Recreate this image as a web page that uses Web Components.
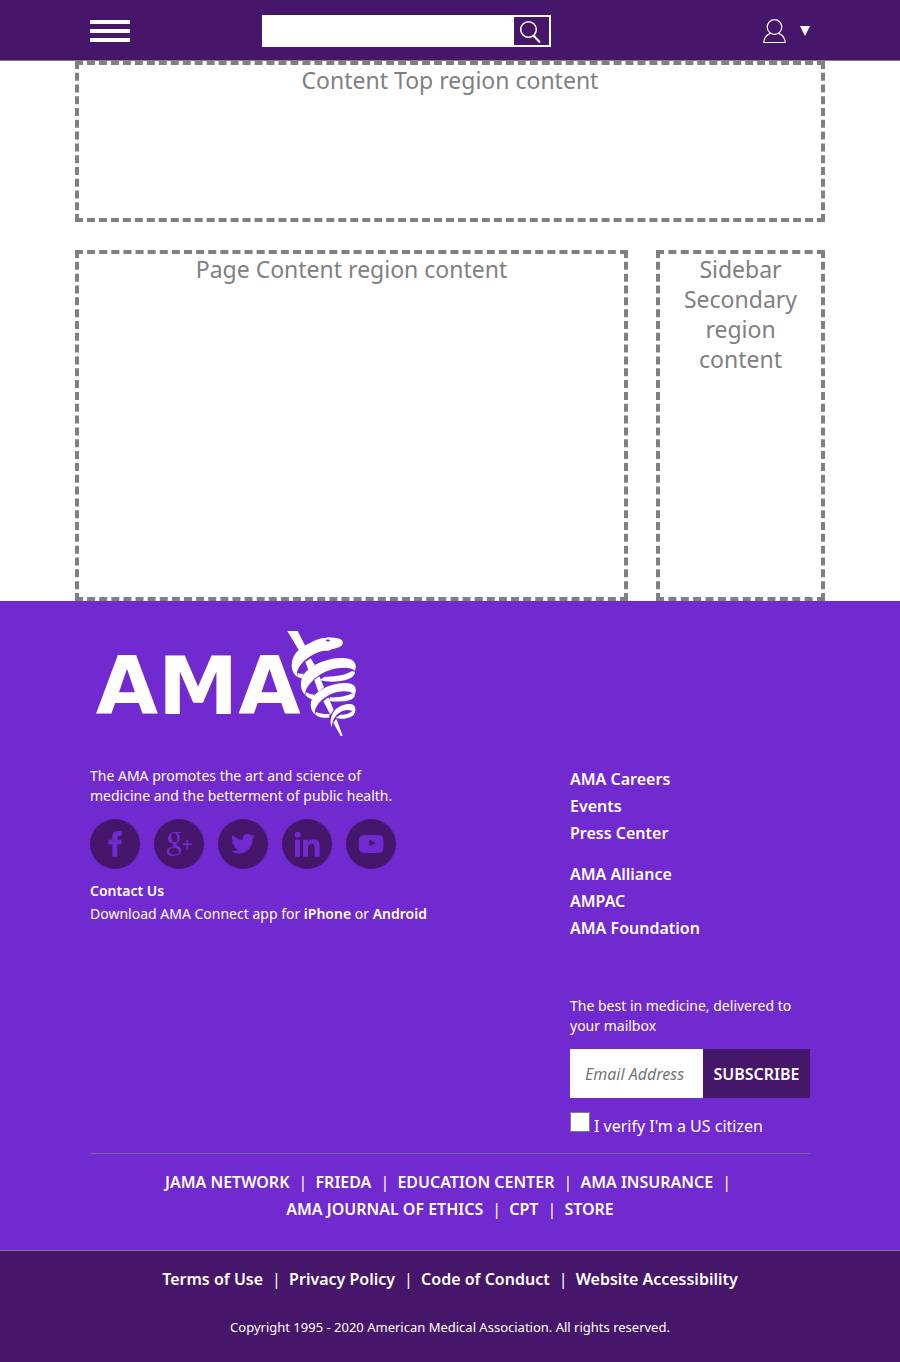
<!DOCTYPE html>
<html lang="en">
<head>
<meta charset="utf-8">
<meta name="viewport" content="width=device-width, initial-scale=1">
<title>American Medical Association</title>
<style>
  :root {
    --purple: #7129d0;
    --dark: #46166b;
    --gray: #808080;
  }
  body {
    margin: 0;
    background: #fff;
    font-family: "Noto Sans", "Open Sans", sans-serif;
    color: #fff;
  }
</style>
</head>
<body>
<ama-page>
  <ama-header slot="header"></ama-header>
  <ama-region slot="top">Content Top region content</ama-region>
  <ama-region slot="content" class="tall">Page Content region content</ama-region>
  <ama-region slot="sidebar" class="tall">Sidebar Secondary region content</ama-region>
  <ama-footer slot="footer"></ama-footer>
</ama-page>

<script>
function define(name, html, setup) {
  const template = document.createElement('template');
  template.innerHTML = html;
  customElements.define(name, class extends HTMLElement {
    constructor() {
      super();
      this.attachShadow({ mode: 'open' }).append(template.content.cloneNode(true));
    }
    connectedCallback() {
      if (setup) setup(this, this.shadowRoot);
    }
  });
}

define('ama-page', `
  <style>
    :host { display: block; }
    main {
      display: grid;
      grid-template-columns: 553fr 169fr;
      gap: 28px;
      max-width: 750px;
      margin: 0 auto;
    }
    .top { grid-column: 1 / -1; }
  </style>
  <slot name="header"></slot>
  <main>
    <div class="top"><slot name="top"></slot></div>
    <slot name="content"></slot>
    <slot name="sidebar"></slot>
  </main>
  <slot name="footer"></slot>
`);

define('ama-region', `
  <style>
    :host {
      display: block;
      box-sizing: border-box;
      min-height: 161px;
      padding: 0 15px;
      border: 4px dashed var(--gray);
      color: var(--gray);
      font-size: 23px;
      line-height: 30px;
      text-align: center;
    }
    :host(.tall) { min-height: 351px; }
  </style>
  <slot></slot>
`);

define('ama-header', `
  <style>
    :host {
      display: block;
      background: var(--dark);
      border-bottom: 1px solid var(--gray);
    }
    header {
      display: grid;
      grid-template-columns: 172px 289px 1fr;
      align-items: center;
      box-sizing: border-box;
      max-width: 750px;
      min-height: 60px;
      margin: 0 auto;
      padding: 0 15px;
    }
    button {
      margin: 0;
      padding: 0;
      border: 0;
      background: none;
      color: #fff;
      cursor: pointer;
    }
    svg { display: block; }
    .menu {
      display: grid;
      gap: 5px;
      width: 40px;
      margin-top: 2px;
    }
    .menu span { height: 4px; background: #fff; }
    form {
      display: flex;
      box-sizing: border-box;
      height: 32px;
      margin-top: 2px;
      border: 2px solid #fff;
      background: #fff;
    }
    input {
      flex: 1;
      min-width: 0;
      padding: 0 8px;
      border: 0;
      outline: 0;
      font: 16px "Noto Sans", sans-serif;
    }
    .search {
      display: grid;
      place-items: center;
      width: 35px;
      background: var(--dark);
    }
    .user {
      display: flex;
      align-items: center;
      gap: 14px;
      justify-self: end;
      margin-top: 2px;
    }
  </style>
  <header>
    <button class="menu" type="button" aria-label="Menu"><span></span><span></span><span></span></button>
    <form role="search">
      <input type="search" aria-label="Search">
      <button class="search" type="button" aria-label="Submit search">
        <svg width="24" height="24" viewBox="0 0 24 24" fill="none" stroke="#fff">
          <circle cx="8.500" cy="10.500" r="7.800" stroke-width="1.500"/>
          <path d="M13.500 16.500 20 23.500" stroke-width="2"/>
        </svg>
      </button>
    </form>
    <button class="user" type="button" aria-label="Account">
      <svg width="24" height="26" viewBox="0 0 24 26" fill="none" stroke="#fff" stroke-width="1.2">
        <circle cx="12.500" cy="9" r="7.300"/>
        <path d="M8.500 15.400C4.500 16.800 2.100 20 1.800 24.500H23.200C22.900 20 20.500 16.800 16.500 15.400"/>
      </svg>
      <svg width="10" height="10" viewBox="0 0 10 10" fill="#fff"><path d="M0 0H10L5 10Z"/></svg>
    </button>
  </header>
`);

define('ama-logo', `
  <style>
    :host { display: block; width: 290px; }
    svg { display: block; width: 100%; height: auto; }
    text { font: bold 242px "DejaVu Sans", sans-serif; }
  </style>
  <svg viewBox="0 0 870 375" fill="#fff" role="img" aria-label="AMA">
    <text x="32" y="276">AMA</text>
    <g transform="translate(585 0)">
      <path d="M22 27H53L77 74C70 79 65 84 60 91Z"/>
      <path d="M53 165C38 155 33 140 36 120C40 96 58 79 82 67C100 57 120 47 139 47C150 44 164 48 181 51C188 53 190 62 187 68C181 76 165 80 154 82C148 87 140 87 134 86C110 89 88 102 71 118C56 134 47 149 53 165Z"/>
      <path d="M54 153C60 156 66 156 71 155L66 169C61 168 57 167 53 164C52 160 52 157 54 153Z"/>
      <path d="M76 120 92 109 104 129 85 143Z"/>
      <path d="M75 218C61 205 60 184 67 165C78 143 103 127 130 118C156 108 191 105 211 112C226 118 231 132 225 146C216 137 194 135 171 139C140 144 112 160 94 180C82 193 75 205 75 218Z"/>
      <path d="M134 164C165 165 197 159 216 147L225 150C225 166 202 175 177 178C156 180 136 179 119 174Z"/>
      <path d="M103 174 118 163 132 196 115 209Z"/>
      <path d="M78 211C86 216 95 218 104 218L97 232C89 230 82 226 76 219Z"/>
      <path d="M105 277C93 267 89 249 95 233C105 213 126 200 147 192C170 184 198 180 214 186C228 191 231 206 224 219C214 207 193 206 172 210C149 216 129 228 116 244C107 256 103 266 105 277Z"/>
      <path d="M151 226C177 227 203 222 216 214L224 218C226 230 207 237 186 238C170 240 157 238 145 236Z"/>
      <path d="M130 238 145 226 161 263 151 278Z"/>
      <path d="M108 270C120 275 136 277 149 276L147 287C132 288 116 286 106 278Z"/>
      <path d="M155 316C148 297 153 277 166 263C178 251 201 243 215 247C226 250 229 263 224 273C216 264 202 262 188 267C171 274 157 289 155 316Z"/>
      <path d="M181 278C195 279 209 274 217 267L224 271C224 282 208 288 194 290C184 291 175 290 168 287Z"/>
      <path d="M160 302 169 290 188 341 182 342Z"/>
      <path d="M137 54C142 51 149 52 150 56C146 60 140 60 137 54Z" fill="#7129d0"/>
    </g>
  </svg>
`);

define('ama-social', `
  <style>
    :host { display: flex; gap: 14px; }
    a {
      width: 50px;
      height: 50px;
      border-radius: 50%;
      background: var(--dark);
      color: var(--purple);
    }
    svg { display: block; width: 50px; height: 50px; }
  </style>
  <a href="#" aria-label="Facebook"><svg viewBox="0 0 150 150" fill="currentColor"><path d="M67 113V76H55V62H67V54C67 42 74 36 85 36H95V50H88C83 50 82 52 82 57V62H95L93 76H82V113Z"/></svg></a>
  <a href="#" aria-label="Google Plus"><svg viewBox="0 0 150 150" fill="currentColor" fill-rule="evenodd">
    <path d="M82 39 76 43H71C76 47 78 51 78 56C78 64 73 68 68 72C65 75 67 77 70 79C77 83 82 87 82 94C82 105 71 111 58 111C46 111 38 106 38 98C38 90 46 84 59 83C56 80 56 77 58 74C48 74 42 67 42 58C42 47 51 39 62 39ZM60 42C54 42 51 47 52 54C53 63 58 71 64 70C69 70 71 65 70 58C69 49 66 42 60 42ZM62 86C52 86 45 90 45 97C45 103 51 107 60 107C69 107 75 103 75 97C75 92 70 90 64 86Z"/>
    <path d="M97 62H102V73H113V78H102V89H97V78H86V73H97Z"/></svg></a>
  <a href="#" aria-label="Twitter"><svg viewBox="0 0 150 150" fill="currentColor"><path transform="translate(39 38) scale(3)" d="M23.950 4.570a10 10 0 0 1-2.820.770 4.960 4.960 0 0 0 2.160-2.720c-.950.550-2 .950-3.120 1.180a4.920 4.920 0 0 0-8.390 4.480C7.690 8.090 4.070 6.130 1.640 3.160a4.930 4.930 0 0 0 1.520 6.570 4.900 4.900 0 0 1-2.230-.610v.060a4.920 4.920 0 0 0 3.950 4.830 5 5 0 0 1-2.210.080 4.940 4.940 0 0 0 4.600 3.420A9.870 9.870 0 0 1 0 19.540a14 14 0 0 0 7.550 2.210c9.050 0 14-7.500 14-13.980 0-.210 0-.420-.020-.630a9.940 9.940 0 0 0 2.460-2.550z"/></svg></a>
  <a href="#" aria-label="LinkedIn"><svg viewBox="0 0 150 150" fill="currentColor"><circle cx="47" cy="47" r="9"/><path d="M39 62H54V113H39ZM63 62H78V69C82 63 88 61 95 61C108 61 113 69 113 82V113H98V86C98 79 97 74 89 74C81 74 78 79 78 86V113H63Z"/></svg></a>
  <a href="#" aria-label="YouTube"><svg viewBox="0 0 150 150" fill="currentColor" fill-rule="evenodd"><path d="M50 49Q75 47 101 49Q111 50 112 60Q114 75 112 90Q111 100 101 101Q75 103 50 101Q40 100 39 90Q37 75 39 60Q40 50 50 49ZM70 62V82L90 72Z"/></svg></a>
`);

define('ama-signup', `
  <style>
    :host { display: block; font-size: 14px; line-height: 20px; }
    p { margin: 0 0 13px; }
    .row { display: flex; height: 49px; }
    input, button { font-family: inherit; font-size: 16px; border-radius: 0; }
    .email {
      flex: 1;
      min-width: 0;
      box-sizing: border-box;
      padding: 0 15px;
      border: 0;
      background: #fff;
      color: #333;
    }
    .email::placeholder { color: #757575; font-style: italic; opacity: 1; }
    button {
      width: 107px;
      padding: 0;
      border: 0;
      background: var(--dark);
      color: #fff;
      font-weight: 600;
      cursor: pointer;
    }
    .verify { display: flex; gap: 4px; margin-top: 14px; }
    .verify input {
      appearance: none;
      box-sizing: border-box;
      width: 20px;
      height: 20px;
      margin: 0;
      border: 1px solid var(--gray);
      background: #fff;
    }
    .verify input:checked { background: var(--dark); }
    .verify label { font-size: 16px; line-height: 28px; }
  </style>
  <form>
    <p>The best in medicine, delivered to your mailbox</p>
    <div class="row">
      <input class="email" type="email" placeholder="Email Address" aria-label="Email Address">
      <button type="button">SUBSCRIBE</button>
    </div>
    <div class="verify">
      <input type="checkbox" id="citizen">
      <label for="citizen">I verify I'm a US citizen</label>
    </div>
  </form>
`);

define('ama-links', `
  <style>
    :host { display: block; font-size: 16px; line-height: 27px; text-align: center; }
    ul { margin: 0; padding: 0; list-style: none; }
    li { display: inline-block; }
    a { color: #fff; font-weight: 600; text-decoration: none; }
    .bar { margin: 0 4px 0 9px; }
    :host([stacked]) { text-align: left; }
    :host([stacked]) li { display: block; }
  </style>
  <ul></ul>
`, (host, root) => {
  const list = root.querySelector('ul');
  const names = host.getAttribute('items').split(',');
  list.replaceChildren();
  names.forEach((name, i) => {
    const item = document.createElement('li');
    const link = document.createElement('a');
    link.href = '#';
    link.textContent = name;
    item.append(link);
    if (i < names.length - 1 && !host.hasAttribute('stacked')) {
      const bar = document.createElement('span');
      bar.className = 'bar';
      bar.textContent = '|';
      item.append(bar);
    }
    list.append(item, ' ');
  });
});

define('ama-footer', `
  <style>
    :host { display: block; background: var(--purple); font-size: 14px; line-height: 20px; }
    .inner { max-width: 720px; margin: 0 auto; padding: 21px 15px 27px; }
    ama-logo { margin-left: -5px; }
    .columns {
      display: grid;
      grid-template-columns: minmax(0, 2fr) minmax(0, 1fr);
      margin-top: 19px;
    }
    .about p { margin: 0; }
    .about .mission { max-width: 320px; margin-bottom: 13px; }
    .about .line { line-height: 23px; }
    .about ama-social { margin-bottom: 10px; }
    .about a { color: #fff; font-weight: 600; text-decoration: none; }
    .side { display: grid; grid-template-columns: minmax(0, 1fr); gap: 14px; }
    ama-signup { margin-top: 40px; }
    .network { margin-top: 13px; padding-top: 15px; border-top: 1px solid rgba(128, 128, 128, .7); }
    .legal {
      box-sizing: border-box;
      min-height: 112px;
      padding: 15px 15px 24px;
      border-top: 1px solid var(--gray);
      background: var(--dark);
      text-align: center;
    }
    .legal p { margin: 24px 0 0; font-size: 13px; }
  </style>
  <footer>
    <div class="inner">
      <ama-logo></ama-logo>
      <div class="columns">
        <div class="about">
          <p class="mission">The AMA promotes the art and science of medicine and the betterment of public health.</p>
          <ama-social></ama-social>
          <p class="line"><a href="#">Contact Us</a></p>
          <p class="line">Download AMA Connect app for <a href="#">iPhone</a> or <a href="#">Android</a></p>
        </div>
        <div class="side">
          <ama-links stacked items="AMA Careers,Events,Press Center"></ama-links>
          <ama-links stacked items="AMA Alliance,AMPAC,AMA Foundation"></ama-links>
          <ama-signup></ama-signup>
        </div>
      </div>
      <div class="network">
        <ama-links items="JAMA NETWORK,FRIEDA,EDUCATION CENTER,AMA INSURANCE,AMA JOURNAL OF ETHICS,CPT,STORE"></ama-links>
      </div>
    </div>
    <div class="legal">
      <ama-links items="Terms of Use,Privacy Policy,Code of Conduct,Website Accessibility"></ama-links>
      <p>Copyright 1995 - 2020 American Medical Association. All rights reserved.</p>
    </div>
  </footer>
`);
</script>
</body>
</html>
